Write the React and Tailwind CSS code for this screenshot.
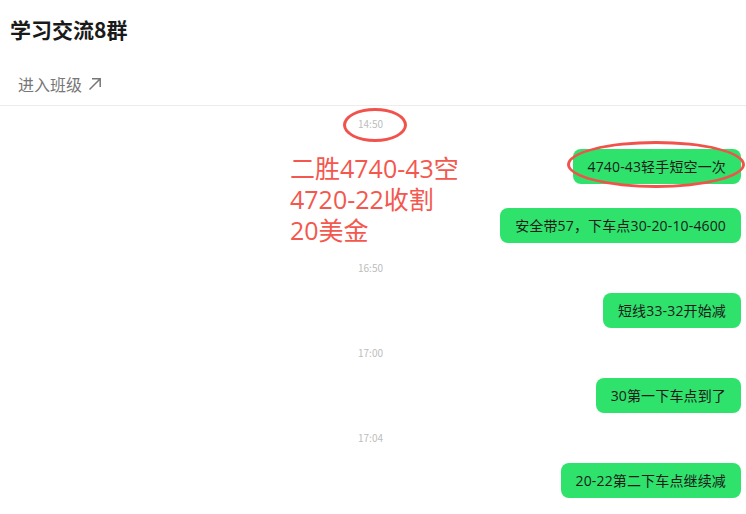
const font = {
  fontFamily: '"Noto Sans CJK SC", "Noto Sans", sans-serif',
};

const latinFirst = {
  fontFamily: '"Open Sans", "Noto Sans CJK SC", sans-serif',
};

const items = [
  { type: "time", text: "14:50" },
  { type: "msg", text: "4740-43轻手短空一次" },
  { type: "msg", text: "安全带57，下车点30-20-10-4600", gap: true },
  { type: "time", text: "16:50" },
  { type: "msg", text: "短线33-32开始减" },
  { type: "time", text: "17:00" },
  { type: "msg", text: "30第一下车点到了" },
  { type: "time", text: "17:04" },
  { type: "msg", text: "20-22第二下车点继续减" },
];

function TimeStamp({ text }) {
  return (
    <div className="mt-[18px] first:mt-[11px] flex h-[14px] items-center justify-center text-[10px] leading-[14px] text-[#bdbdbd]">
      {text}
    </div>
  );
}

function Bubble({ text, gap }) {
  return (
    <div className={`flex justify-end ${gap ? "mt-[24px]" : "mt-[18px]"}`}>
      <div
        className="flex h-[35px] items-center rounded-[8px] bg-[#2ee26b] px-[15px] text-[14px] tracking-[0.15px] text-[#1b1b1b]"
        style={latinFirst}
      >
        {text}
      </div>
    </div>
  );
}

export default function App() {
  return (
    <div
      className="relative h-[514px] w-[746px] overflow-hidden bg-white"
      style={font}
    >
      <div className="flex h-[60px] items-center px-[10px] text-[21px] font-bold text-[#1a1a1a]">
        学习交流8群
      </div>
      <div className="flex h-[46px] items-center gap-[6px] border-b border-[#ececec] pl-[18px] pt-[2px] text-[16px] text-[#777]">
        <span>进入班级</span>
        <svg width="14" height="14" viewBox="0 0 14 14" fill="none">
          <path
            d="M1.5 12.5 L12 2 M4 1.8 H12.2 V10"
            stroke="#777"
            strokeWidth="1.5"
          />
        </svg>
      </div>

      <div className="flex flex-col pr-[5px]">
        {items.map((item, i) =>
          item.type === "time" ? (
            <TimeStamp key={i} text={item.text} />
          ) : (
            <Bubble key={i} text={item.text} gap={item.gap} />
          ),
        )}
      </div>

      {/* red annotations drawn over the chat */}
      <div className="pointer-events-none absolute left-[343px] top-[108px] h-[34px] w-[64px] rounded-[50%] border-[3px] border-[#f2524c]" />
      <div className="pointer-events-none absolute left-[567px] top-[141px] h-[47px] w-[178px] rounded-[50%] border-[3px] border-[#f2524c]" />
      <div
        className="pointer-events-none absolute left-[290px] top-[153px] text-[25px] leading-[31px] text-[#f4574e]"
        style={latinFirst}
      >
        <div>二胜4740-43空</div>
        <div>4720-22收割</div>
        <div>20美金</div>
      </div>
    </div>
  );
}
